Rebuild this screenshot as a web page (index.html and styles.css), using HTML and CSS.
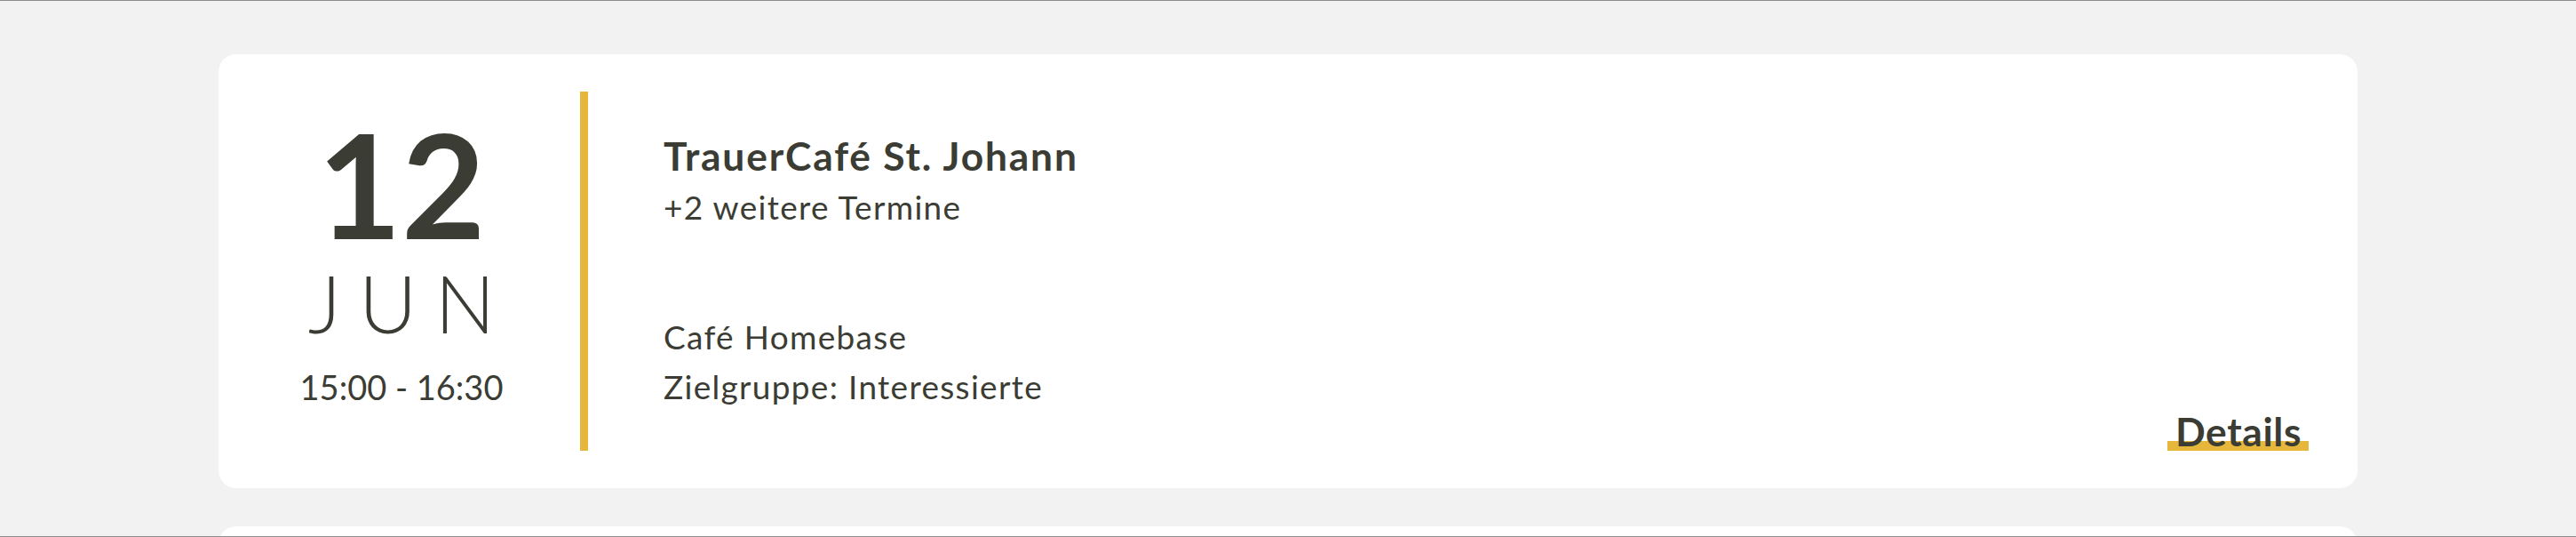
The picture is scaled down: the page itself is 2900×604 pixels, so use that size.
FILE: index.html
```html
<!DOCTYPE html>
<html lang="de">
<head>
  <meta charset="UTF-8">
  <meta name="viewport" content="width=device-width, initial-scale=1.0">
  <title>Termine</title>
  <link rel="stylesheet" href="styles.css">
</head>
<body>
  <div class="frame">
    <!-- Event list -->
    <div class="events">
      <div class="event-card">
        <div class="event-date">
          <span class="day">12</span>
          <span class="month">JUN</span>
          <span class="time">15:00 - 16:30</span>
        </div>
        <div class="event-info">
          <h3>TrauerCafé St. Johann</h3>
          <p class="more">+2 weitere Termine</p>
          <p class="place">Café Homebase</p>
          <p>Zielgruppe: Interessierte</p>
          <a class="details-link" href="#">Details</a>
        </div>
      </div>

      <div class="event-card">
        <div class="event-date">
          <span class="day">19</span>
          <span class="month">JUN</span>
          <span class="time">15:00 - 16:30</span>
        </div>
        <div class="event-info">
          <h3>TrauerCafé St. Johann</h3>
          <p class="place">Café Homebase</p>
          <p>Zielgruppe: Interessierte</p>
          <a class="details-link" href="#">Details</a>
        </div>
      </div>
    </div>
  </div>
</body>
</html>
```

FILE: styles.css
```css
html, body {
  margin: 0;
  padding: 0;
}

body {
  font-family: 'Lato', 'Liberation Sans', sans-serif;
  background-color: #f2f2f2;
  color: #3b3c34;
}

.frame {
  height: 604px;
  box-sizing: border-box;
  border-top: 1px solid #8c8c8c;
  border-bottom: 1px solid #8c8c8c;
  overflow: hidden;
}

/* Event list */
.events {
  width: 2408px;
  margin: 0 auto;
  padding-top: 60px;
  display: flex;
  flex-direction: column;
  gap: 43px;
}

.event-card {
  background-color: white;
  border-radius: 20px;
  padding: 42px 55px 42px 40px;
  height: 404px;
  display: flex;
}

/* Date column */
.event-date {
  width: 332px;
  margin-right: 35px;
  padding-top: 22px;
  display: flex;
  flex-direction: column;
  align-items: center;
}

.day {
  font-size: 163px;
  font-weight: bold;
  line-height: 1;
}

.month {
  font-size: 90px;
  font-weight: 300;
  line-height: 1;
  letter-spacing: 20px;
  margin-left: 20px;
  margin-top: 7px;
}

.time {
  font-size: 38px;
  line-height: 1.5;
  margin-top: 22px;
}

/* Info column */
.event-info {
  flex: 1;
  border-left: 9px solid #e6b73b;
  padding-left: 85px;
  padding-top: 44px;
  display: flex;
  flex-direction: column;
  font-size: 37px;
  line-height: 1.5;
  letter-spacing: 1.3px;
}

.event-info h3 {
  margin: 0;
  font-size: 44.4px;
  line-height: 1.25;
  letter-spacing: 1.8px;
}

.event-info p {
  margin: 0;
}

.event-info .more {
  margin-top: 2px;
}

.event-info .place {
  margin-top: 91px;
}

.details-link {
  margin-top: auto;
  align-self: flex-end;
  font-size: 44.4px;
  font-weight: bold;
  line-height: 1;
  letter-spacing: 0.6px;
  padding: 0 8px 0 9px;
  color: #3b3c34;
  text-decoration: none;
  background: linear-gradient(transparent 75%, #e6b73b 75%);
}
```
